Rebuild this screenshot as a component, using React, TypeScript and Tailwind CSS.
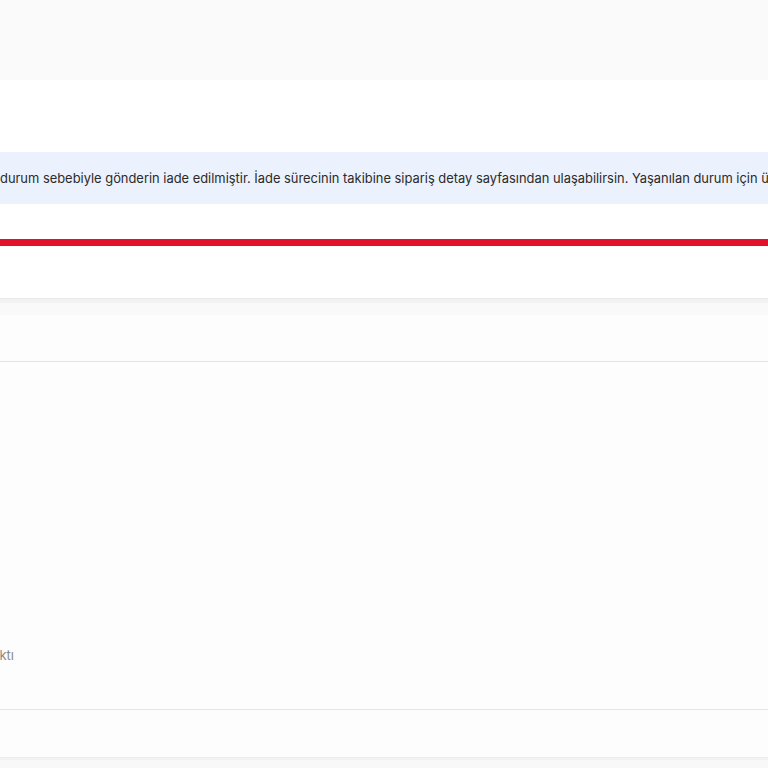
export default function App() {
  return (
    <div className="w-[768px] h-[768px] overflow-hidden bg-white flex flex-col" style={{ fontFamily: 'Inter, "Noto Sans", sans-serif' }}>
      <div className="h-[80px] shrink-0 bg-[#fafafa]" />
      <div className="h-[72px] shrink-0 bg-white" />
      <div className="h-[52px] shrink-0 bg-[#ebf2fd] flex items-center overflow-hidden">
        <p className="whitespace-nowrap text-[12.9px] text-[#2b2b2b] leading-[18px] pt-[1px]">
          durum sebebiyle gönderin iade edilmiştir. İade sürecinin takibine sipariş detay sayfasından ulaşabilirsin. Yaşanılan durum için üzgünüz.
        </p>
      </div>
      <div className="h-[35px] shrink-0 bg-white" />
      <div className="h-[7px] shrink-0 bg-[#e3112c]" />
      <div className="h-[52px] shrink-0 bg-white" />
      <div className="h-[1px] shrink-0 bg-[#e8e8e8]" />
      <div className="h-[4px] shrink-0 bg-[#f2f2f2]" />
      <div className="h-[12px] shrink-0 bg-[#f9f9f9]" />
      <div className="h-[46px] shrink-0 bg-[#fdfdfd]" />
      <div className="h-[1px] shrink-0 bg-[#e3e3e3]" />
      <div className="shrink-0 bg-[#fdfdfd] flex flex-col">
        <div className="h-[284px]" />
        <div className="flex justify-end w-[14px] h-[18px]">
          <p className="whitespace-nowrap text-[13px] text-[#888888] leading-[18px] shrink-0">Yola Çıktı</p>
        </div>
        <div className="h-[45px]" />
        <div className="h-[1px] bg-[#e6e6e6]" />
        <div className="h-[47px]" />
      </div>
      <div className="h-[1px] shrink-0 bg-[#ececec]" />
      <div className="h-[2px] shrink-0 bg-[#f2f2f2]" />
      <div className="flex-1 bg-[#f8f8f8]" />
    </div>
  );
}
